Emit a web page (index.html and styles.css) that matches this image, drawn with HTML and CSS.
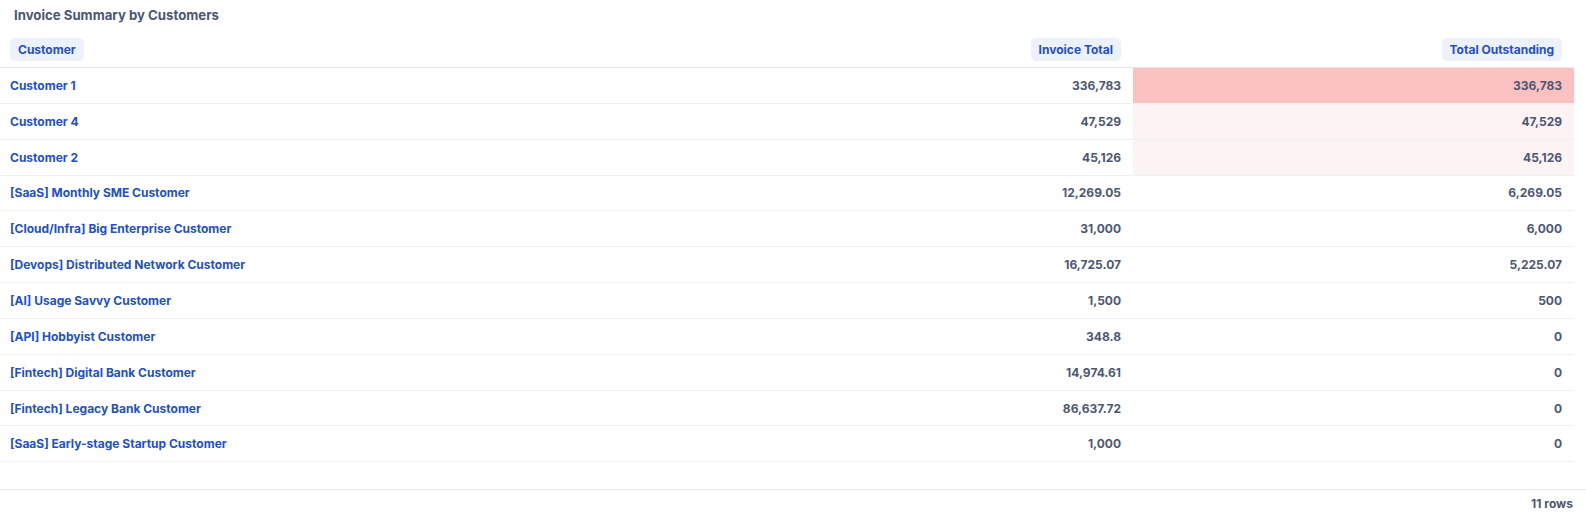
FILE: index.html
```html
<!DOCTYPE html>
<html>

<head>
    <link rel="stylesheet" href="styles.css">
</head>

<body>
    <div class="card">
        <div class="title">Invoice Summary by Customers</div>
        <div class="table">
            <div class="row head">
                <div class="cell"><span class="pill">Customer</span></div>
                <div class="cell num"><span class="pill">Invoice Total</span></div>
                <div class="cell num"><span class="pill">Total Outstanding</span></div>
            </div>
            <div class="row">
                <div class="cell name">Customer 1</div>
                <div class="cell num">336,783</div>
                <div class="cell num hot">336,783</div>
            </div>
            <div class="row">
                <div class="cell name">Customer 4</div>
                <div class="cell num">47,529</div>
                <div class="cell num warm">47,529</div>
            </div>
            <div class="row">
                <div class="cell name">Customer 2</div>
                <div class="cell num">45,126</div>
                <div class="cell num warm">45,126</div>
            </div>
            <div class="row">
                <div class="cell name">[SaaS] Monthly SME Customer</div>
                <div class="cell num">12,269.05</div>
                <div class="cell num">6,269.05</div>
            </div>
            <div class="row">
                <div class="cell name">[Cloud/Infra] Big Enterprise Customer</div>
                <div class="cell num">31,000</div>
                <div class="cell num">6,000</div>
            </div>
            <div class="row">
                <div class="cell name">[Devops] Distributed Network Customer</div>
                <div class="cell num">16,725.07</div>
                <div class="cell num">5,225.07</div>
            </div>
            <div class="row">
                <div class="cell name">[AI] Usage Savvy Customer</div>
                <div class="cell num">1,500</div>
                <div class="cell num">500</div>
            </div>
            <div class="row">
                <div class="cell name">[API] Hobbyist Customer</div>
                <div class="cell num">348.8</div>
                <div class="cell num">0</div>
            </div>
            <div class="row">
                <div class="cell name">[Fintech] Digital Bank Customer</div>
                <div class="cell num">14,974.61</div>
                <div class="cell num">0</div>
            </div>
            <div class="row">
                <div class="cell name">[Fintech] Legacy Bank Customer</div>
                <div class="cell num">86,637.72</div>
                <div class="cell num">0</div>
            </div>
            <div class="row">
                <div class="cell name">[SaaS] Early-stage Startup Customer</div>
                <div class="cell num">1,000</div>
                <div class="cell num">0</div>
            </div>
        </div>
        <div class="footer">11 rows</div>
    </div>
</body>

</html>
```

FILE: styles.css
```css
* {
    margin: 0;
    padding: 0;
    box-sizing: border-box;
}

body {
    font-family: Inter, "Noto Sans", sans-serif;
    font-weight: 700;
    font-size: 12px;
    color: #4c5773;
    background: #fff;
}

.card {
    width: 1586px;
    height: 513px;
    overflow: hidden;
}

.title {
    font-size: 13.2px;
    padding: 6px 14px 0;
    height: 32px;
    line-height: 18px;
}

.table {
    width: 1574px;
}

.row {
    display: grid;
    grid-template-columns: 1fr 441px 441px;
    height: 35.85px;
    border-bottom: 1px solid #f0f0f3;
}

.row.head {
    height: 36px;
    border-bottom: 1px solid #e7e8ec;
    padding-top: 6px;
}

.cell {
    display: flex;
    align-items: center;
    padding: 0 12px 0 10px;
}

.head .cell {
    align-items: flex-start;
}

.num {
    justify-content: flex-end;
}

.name {
    color: #2150c6;
}

.pill {
    background: #edf1fa;
    color: #2150c6;
    border-radius: 5px;
    height: 23px;
    line-height: 23px;
    padding: 0 8px;
}

.hot {
    background: #fbc1c1;
}

.warm {
    background: #fcf4f4;
}

.footer {
    border-top: 1px solid #e7e8ec;
    margin-top: 27px;
    height: 24px;
    display: flex;
    align-items: center;
    justify-content: flex-end;
    padding: 3px 13px 0 0;
}
```
